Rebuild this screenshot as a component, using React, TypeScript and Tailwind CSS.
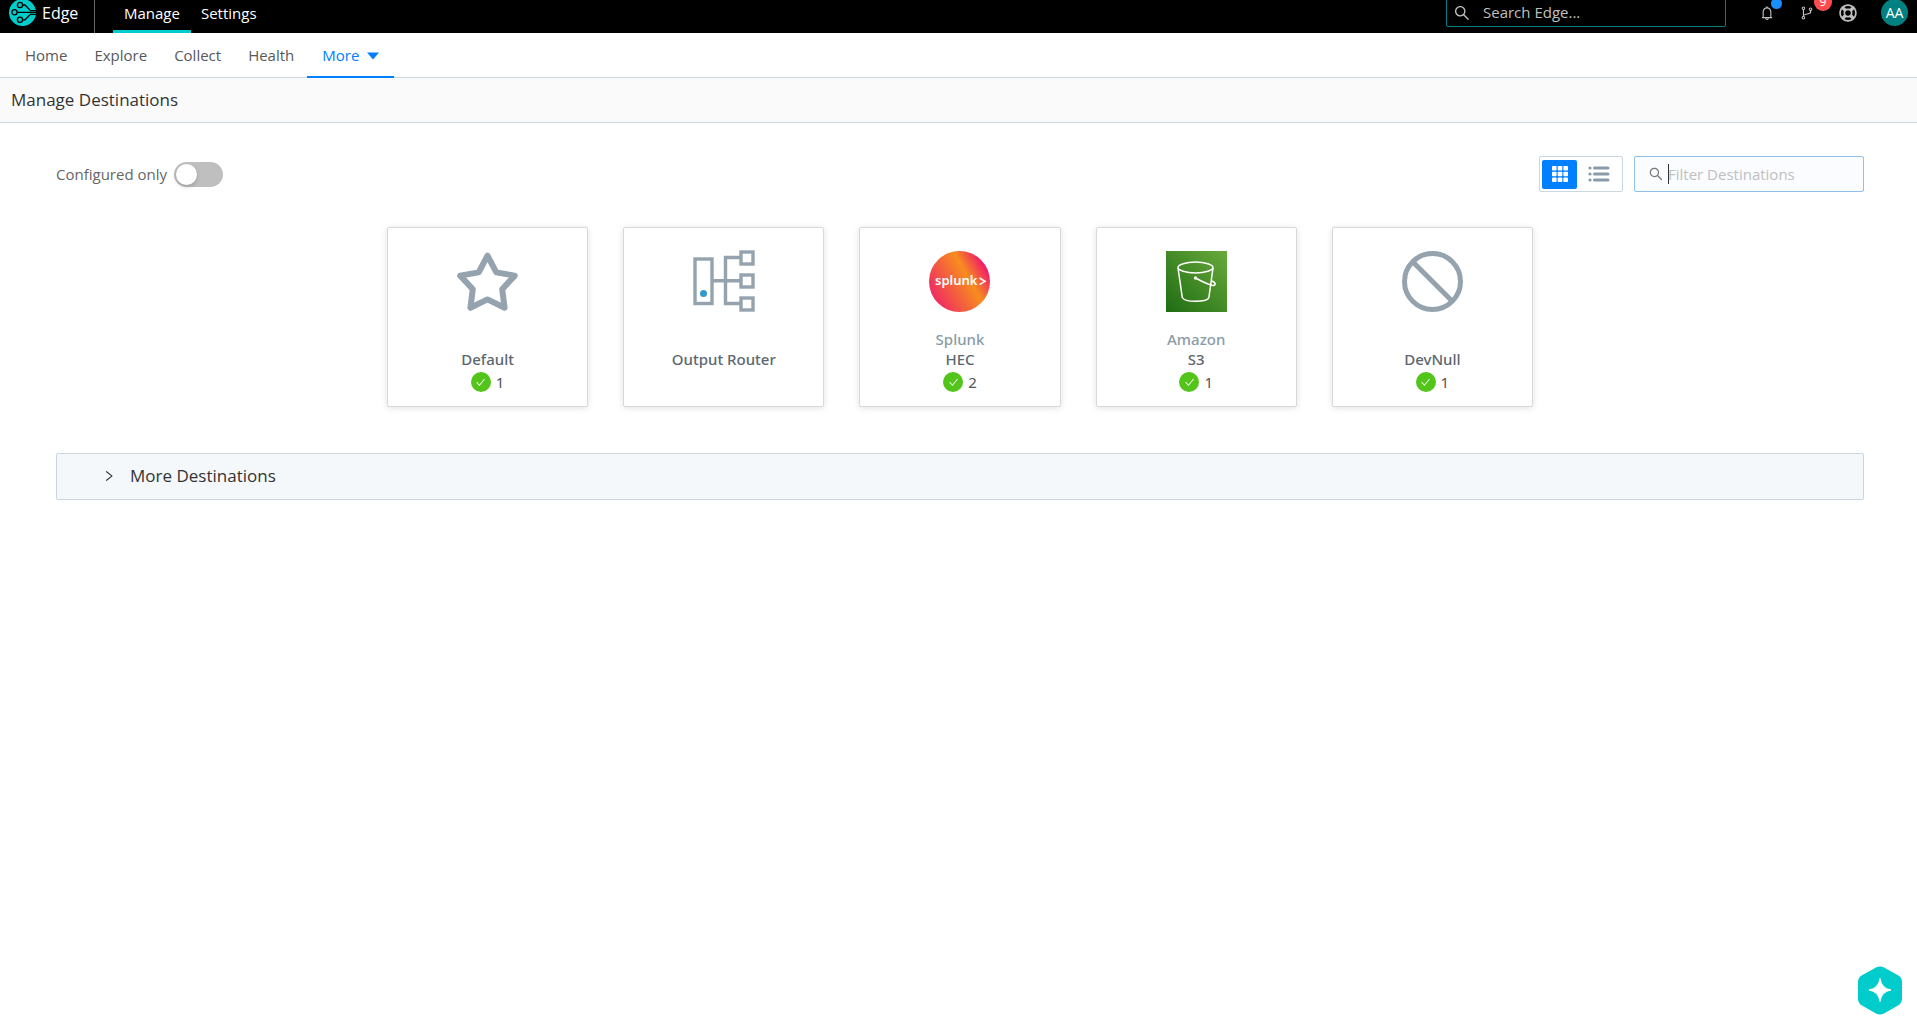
import React from "react";
import {
  AiOutlineBell,
  AiOutlineBranches,
  AiOutlineCheck,
  AiOutlineRight,
  AiOutlineSearch,
} from "react-icons/ai";
import { FaRegLifeRing } from "react-icons/fa";

function LogoIcon() {
  return (
    <svg width="27" height="27" viewBox="0 0 27 27" fill="none" stroke="#000" strokeWidth="1.3" aria-hidden="true">
      <circle cx="13.5" cy="13.5" r="13.5" fill="#00cccc" stroke="none" />
      <circle cx="11" cy="6" r="2.6" />
      <circle cx="5.5" cy="13.3" r="2.6" />
      <circle cx="11" cy="20.8" r="2.6" />
      <path d="M13.6 6H16l5.5 5.6H27M8.1 13.4H27M13.6 20.8H16l5.5-5.5H27" />
    </svg>
  );
}

function StarIcon() {
  return (
    <svg width="61" height="61" viewBox="0 0 61 61" aria-hidden="true">
      <path
        d="M30.5 4.7 39.3 21.4 57.8 24.6 45.2 38.2 47.6 56.8 30.5 48.4 13.4 56.8 15.8 38.2 3.2 24.6 21.7 21.4Z"
        fill="none"
        stroke="#94a3ae"
        strokeWidth="6"
        strokeLinejoin="round"
      />
    </svg>
  );
}

function RouterIcon() {
  return (
    <svg width="62" height="62" viewBox="0 0 62 62" fill="none" stroke="#94a3ae" strokeWidth="3.4" aria-hidden="true">
      <rect x="2" y="9" width="17" height="44.5" />
      <path d="M19 30.7H48M48 7.5H32.5V53.5H48" />
      <rect x="48" y="2" width="12" height="12" fill="#fff" />
      <rect x="48" y="25" width="12" height="12" fill="#fff" />
      <rect x="48" y="48" width="12" height="12" fill="#fff" />
      <circle cx="10.5" cy="43.5" r="3.5" fill="#3399cc" stroke="none" />
    </svg>
  );
}

function SplunkIcon() {
  return (
    <svg width="61" height="61" viewBox="0 0 61 61" aria-hidden="true">
      <defs>
        <linearGradient id="splunk" gradientUnits="userSpaceOnUse" x1="5" y1="43" x2="55.6" y2="13.8">
          <stop offset="0" stopColor="#f0305f" />
          <stop offset="0.65" stopColor="#f78d1e" />
          <stop offset="1" stopColor="#f01a6a" />
        </linearGradient>
      </defs>
      <circle cx="30.5" cy="30.5" r="30.5" fill="url(#splunk)" />
      <text x="6" y="34" fontSize="13" fontWeight="600" fill="#fff" fontFamily="'Noto Sans', 'Open Sans', sans-serif">
        splunk
      </text>
      <path d="M50.5 27 56 30.3 50.5 33.6" fill="none" stroke="#fff" strokeWidth="1.5" />
    </svg>
  );
}

function BucketIcon() {
  return (
    <svg width="61" height="61" viewBox="0 0 61 61" fill="none" stroke="#fff" strokeWidth="1.5" aria-hidden="true">
      <defs>
        <linearGradient id="s3" x1="0" y1="1" x2="1" y2="0">
          <stop offset="0" stopColor="#1f6c13" />
          <stop offset="1" stopColor="#68a93b" />
        </linearGradient>
      </defs>
      <rect width="61" height="61" fill="url(#s3)" stroke="none" />
      <ellipse cx="29.5" cy="16.5" rx="17.5" ry="5.4" />
      <path d="M12 17 16.3 46.5C17.5 49 22 50.3 29.5 50.3S42 49 42.9 46.5L47 17" />
      <circle cx="29.5" cy="27" r="1.7" fill="#fff" stroke="none" />
      <path d="M29.5 27C35 30 41 33 46 34.3 50 35 50.5 32 46 30" />
    </svg>
  );
}

function NullIcon() {
  return (
    <svg width="61" height="61" viewBox="0 0 61 61" fill="none" stroke="#94a3ae" strokeWidth="5" aria-hidden="true">
      <circle cx="30.5" cy="30.5" r="28" />
      <path d="M11 11 50 50" />
    </svg>
  );
}

function GridIcon() {
  return (
    <svg width="16" height="16" viewBox="0 0 16 16" fill="currentColor" aria-hidden="true">
      {[0, 5.7, 11.4].map((y) =>
        [0, 5.7, 11.4].map((x) => <rect key={`${x}-${y}`} x={x} y={y} width="4.6" height="4.6" rx="0.8" />),
      )}
    </svg>
  );
}

function ListIcon() {
  return (
    <svg width="22" height="18" viewBox="0 0 22 18" fill="currentColor" aria-hidden="true">
      {[3, 9, 15].map((y) => (
        <g key={y}>
          <circle cx="2" cy={y} r="1.6" />
          <rect x="5" y={y - 1.6} width="16.5" height="3.2" rx="1.5" />
        </g>
      ))}
    </svg>
  );
}

type Destination = { vendor?: string; name: string; count?: number; icon: React.ReactNode };

const destinations: Destination[] = [
  { name: "Default", count: 1, icon: <StarIcon /> },
  { name: "Output Router", icon: <RouterIcon /> },
  { vendor: "Splunk", name: "HEC", count: 2, icon: <SplunkIcon /> },
  { vendor: "Amazon", name: "S3", count: 1, icon: <BucketIcon /> },
  { name: "DevNull", count: 1, icon: <NullIcon /> },
];

function DestinationCard({ vendor, name, count, icon }: Destination) {
  return (
    <button className="flex h-[180px] flex-col items-center rounded-xs border border-[#d9d9d9] bg-white pt-[22px] font-['Noto_Sans','Open_Sans',sans-serif] text-[15px] leading-5 font-medium shadow-[0_1px_6px_rgba(0,0,0,0.12)]">
      <span className="flex h-[62px] items-center">{icon}</span>
      <span className="mt-[17px] h-5 text-[#8a9ba8]">{vendor}</span>
      <span className="text-[#5c6770]">{name}</span>
      {count !== undefined && (
        <span className="mt-[3px] flex items-center gap-[5px] font-normal text-[#555]">
          <span className="flex size-5 items-center justify-center rounded-full bg-[#52c41a] text-white">
            <AiOutlineCheck size={11} />
          </span>
          {count}
        </span>
      )}
    </button>
  );
}

function TopBar() {
  return (
    <header className="flex h-[33px] items-end overflow-hidden bg-black text-white">
      <div className="flex h-[41px] w-full items-center">
        <a href="#edge" className="flex h-full w-[95px] items-center gap-[6px] border-r border-[#666] pl-[9px] text-base">
          <LogoIcon />
          Edge
        </a>
        <nav className="ml-[18px] flex h-full text-[15px]">
          <a href="#manage" className="flex items-center border-b-3 border-[#00cccc] px-[11px] pt-[5px]">
            Manage
          </a>
          <a href="#settings" className="flex items-center px-[10px] pt-[2px]">
            Settings
          </a>
        </nav>
        <label className="ml-auto flex h-[29px] w-[280px] items-center gap-3 rounded-xs border border-[#008080] pl-[6px] text-[#bfbfbf]">
          <AiOutlineSearch size={18} />
          <input
            type="text"
            aria-label="Search Edge"
            placeholder="Search Edge..."
            className="min-w-0 flex-1 bg-transparent text-[15px] outline-none placeholder:text-[#bfbfbf]"
          />
        </label>
        <div className="ml-[33px] flex items-center gap-6 pr-[9px] text-[#bfbfbf]">
          <button aria-label="Notifications" className="relative">
            <AiOutlineBell size={16} />
            <span className="absolute -top-[7px] -right-[7px] size-[11px] rounded-full bg-[#1890ff]" />
          </button>
          <button aria-label="Commits" className="relative">
            <AiOutlineBranches size={16} />
            <span className="absolute -top-[12px] -right-[17px] flex size-[18px] items-center justify-center rounded-full bg-[#ff4d4f] text-xs text-white">
              9
            </span>
          </button>
          <button aria-label="Help">
            <FaRegLifeRing size={18} />
          </button>
          <button
            aria-label="Account"
            className="flex size-[27px] items-center justify-center rounded-full bg-[#008080] text-sm text-white"
          >
            AA
          </button>
        </div>
      </div>
    </header>
  );
}

function SubNav() {
  return (
    <nav className="flex h-[45px] border-b border-[#ccd6e0] pl-[11px] text-[15px] text-[#595959]">
      {["Home", "Explore", "Collect", "Health"].map((item) => (
        <a key={item} href={`#${item.toLowerCase()}`} className="flex items-center pr-[13px] pl-[14px]">
          {item}
        </a>
      ))}
      <button className="-mb-px flex items-center gap-2 border-b-2 border-[#0080ff] px-[15px] pt-[2px] text-[#0080ff]">
        More
        <svg width="12" height="8" viewBox="0 0 12 8" aria-hidden="true">
          <path d="M0 0.5H12L6 7.5Z" fill="currentColor" />
        </svg>
      </button>
    </nav>
  );
}

export default function App() {
  return (
    <div className="min-h-screen bg-white font-['Open_Sans','Noto_Sans',sans-serif] text-[#333]">
      <TopBar />
      <SubNav />
      <h1 className="flex h-[45px] items-center border-b border-[#ccd6e0] bg-[#fafafa] pl-[11px] text-[17px]">
        Manage Destinations
      </h1>
      <main className="pt-[33px] pr-[53px] pl-14">
        <div className="flex h-9 items-center">
          <label className="flex items-center gap-[7px] text-[15px] text-[#666]">
            Configured only
            <input
              type="checkbox"
              role="switch"
              className="h-[25px] w-[49px] appearance-none rounded-full bg-[#bfbfbf] p-[2px] before:block before:size-[21px] before:rounded-full before:bg-white before:shadow-[0_2px_4px_rgba(0,35,11,0.2)] checked:bg-[#0080ff] checked:before:ml-6"
            />
          </label>
          <div className="ml-auto flex h-9 w-[84px] items-center rounded-xs border border-[#ccd6e0] pl-[2px]">
            <button
              aria-label="Grid view"
              aria-pressed="true"
              className="flex h-[29px] w-[35px] items-center justify-center rounded-xs bg-[#0080ff] text-white"
            >
              <GridIcon />
            </button>
            <button aria-label="List view" className="flex h-[29px] w-11 items-center justify-center text-[#8a9ba8]">
              <ListIcon />
            </button>
          </div>
          <label className="relative ml-[11px] flex h-9 w-[230px] items-center gap-1 rounded-xs border border-[#8fc1ee] bg-[#fafcff] pl-[13px] text-[#7a7a7a]">
            <AiOutlineSearch size={16} />
            <span className="absolute left-[33px] h-5 w-px bg-[#333]" />
            <input
              type="text"
              aria-label="Filter Destinations"
              placeholder="Filter Destinations"
              className="min-w-0 flex-1 bg-transparent text-[15px] outline-none placeholder:text-[#bfbfbf]"
            />
          </label>
        </div>

        <div className="mx-auto mt-[35px] grid max-w-[1146px] grid-cols-5 gap-[35px]">
          {destinations.map((d) => (
            <DestinationCard key={d.name} {...d} />
          ))}
        </div>

        <button
          aria-expanded="false"
          className="mt-[46px] flex h-[47px] w-full items-center gap-[14px] rounded-xs border border-[#ccd6e0] bg-[#f4f8fb] pb-[2px] pl-[45px] text-[17px]"
        >
          <AiOutlineRight size={14} />
          More Destinations
        </button>
      </main>

      <button aria-label="Open assistant" className="fixed right-[15px] bottom-3">
        <svg width="44" height="50" viewBox="0 0 44 50" aria-hidden="true">
          <path
            d="M18 1.4Q22 -0.6 26 1.4L40 9.2Q44 11.5 44 16V32.5Q44 37 40 39.5L26 47.5Q22 49.5 18 47.5L4 39.5Q0 37 0 32.5V16Q0 11.5 4 9.2Z"
            fill="#00cccc"
          />
          <path d="M22 12.5Q23.5 22.5 33 24Q23.5 25.5 22 35.5Q20.5 25.5 11 24Q20.5 22.5 22 12.5Z" fill="#fff" stroke="#fff" strokeWidth="1" />
        </svg>
      </button>
    </div>
  );
}
